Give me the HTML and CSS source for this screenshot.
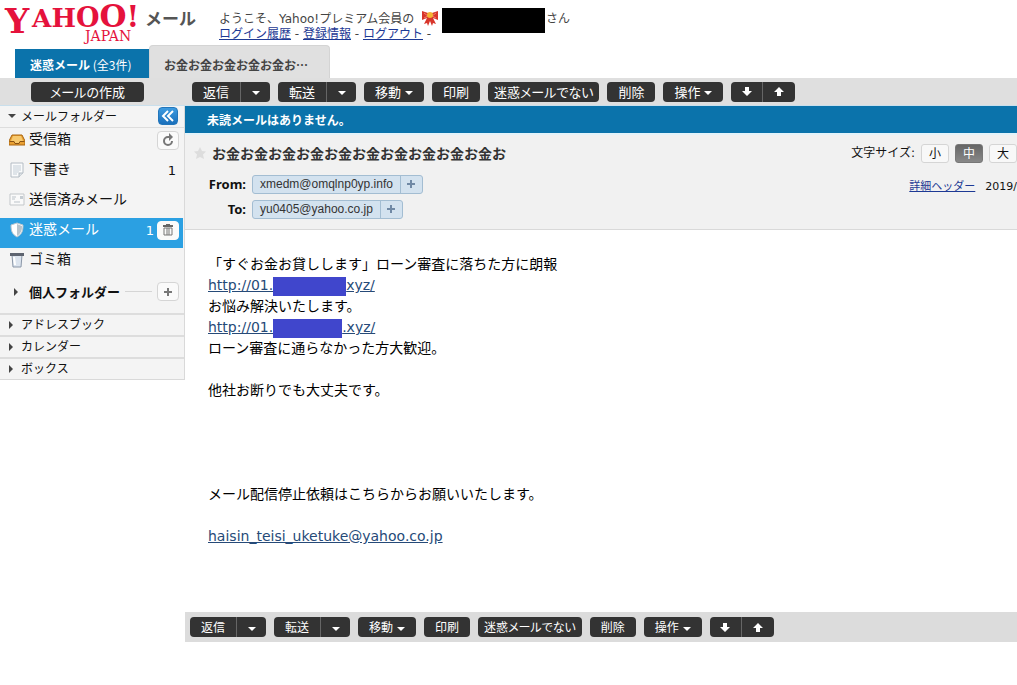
FILE: index.html
```html
<!DOCTYPE html>
<html lang="ja">
<head>
  <meta charset="UTF-8">
  <meta name="viewport" content="width=device-width, initial-scale=1.0">
  <title>Yahoo!メール</title>
  <link rel="stylesheet" href="styles.css">
</head>
<body>
  <header class="header">
    <a class="logo" href="#" aria-label="Yahoo! JAPAN メール">
      <svg viewBox="0 0 143 45" width="143" height="45">
        <g class="logo-red">
          <text x="5" y="33" font-size="34">Y</text>
          <text x="32" y="27"><tspan font-size="25">A</tspan><tspan font-size="26">H</tspan><tspan font-size="27">O</tspan><tspan font-size="31">O</tspan><tspan font-size="29">!</tspan></text>
          <text class="logo-japan" x="85" y="41" font-size="14">JAPAN</text>
        </g>
      </svg>
      <span class="logo-mail">メール</span>
    </a>
    <div class="welcome">
      <div>
        <p>ようこそ、Yahoo!プレミアム会員の
          <svg class="ribbon" viewBox="0 0 16 16" width="16" height="16">
            <path d="M0 1l6 2h4l6-2v9l-5-2 3 6-3-1-1 3-2-5-2 5-1-3-3 1 3-6-5 2z" fill="#d8352a"/>
            <path d="M2 3l4 3-4 2M14 3l-4 3 4 2" stroke="#f0806a" fill="none"/>
            <circle cx="8" cy="5" r="3" fill="#f5b432"/>
          </svg>
        </p>
        <p><a href="#">ログイン履歴</a> - <a href="#">登録情報</a> - <a href="#">ログアウト</a> -</p>
      </div>
      <span class="user-mask"></span>
      <p>さん</p>
    </div>
  </header>

  <nav class="tabs">
    <a class="tab tab-folder" href="#"><b>迷惑メール</b> (全3件)</a>
    <a class="tab tab-mail" href="#">お金お金お金お金お金お…</a>
  </nav>

  <div class="toolbar">
    <div class="compose"><button class="btn btn-compose" type="button">メールの作成</button></div>
    <div class="actions">
      <div class="group"><button class="btn" type="button">返信</button><button class="btn btn-drop" type="button" aria-label="返信メニュー"><i class="arrow"></i></button></div>
      <div class="group"><button class="btn" type="button">転送</button><button class="btn btn-drop" type="button" aria-label="転送メニュー"><i class="arrow"></i></button></div>
      <button class="btn" type="button">移動<i class="arrow"></i></button>
      <button class="btn" type="button">印刷</button>
      <button class="btn btn-long" type="button">迷惑メールでない</button>
      <button class="btn" type="button">削除</button>
      <button class="btn" type="button">操作<i class="arrow"></i></button>
      <div class="group">
        <button class="btn btn-nav" type="button" aria-label="次へ"><svg viewBox="0 0 10 9" width="10" height="9"><path d="M3 0h4v4h3L5 9 0 4h3z"/></svg></button><button class="btn btn-nav" type="button" aria-label="前へ"><svg viewBox="0 0 10 9" width="10" height="9"><path d="M3 9h4V5h3L5 0 0 5h3z"/></svg></button>
      </div>
    </div>
  </div>

  <div class="content">
    <aside class="sidebar">
      <div class="side-head">
        <i class="tri tri-down"></i>メールフォルダー
        <button class="side-btn btn-hide" type="button" aria-label="閉じる"><svg viewBox="0 0 14 12" width="14" height="12"><path d="M7 1L2 6l5 5M12 1L7 6l5 5"/></svg></button>
      </div>
      <ul class="folders">
        <li class="folder">
          <svg viewBox="0 0 16 16" width="16" height="16"><path d="M3 3h10l3 6v4H0V9z" fill="#e9a033" stroke="#a9640f"/><path d="M4 4h8l2 5h-3l-1 2H6L5 9H2z" fill="#f7c96e"/><path d="M0.500 9.500H5l1 2h4l1-2h4.500" fill="none" stroke="#8a5212"/></svg>
          <a href="#">受信箱</a>
          <button class="side-btn" type="button" aria-label="更新"><svg viewBox="0 0 14 14" width="14" height="14"><path d="M11 8a4 4 0 1 1-4-4h2" fill="none" stroke="#777" stroke-width="2"/><path d="M8 0l4 4-4 4z" fill="#777"/></svg></button>
        </li>
        <li class="folder">
          <svg viewBox="0 0 16 16" width="16" height="16"><path d="M2 1h12v10l-4 4H2z" fill="#fafbfc" stroke="#b4bcc4"/><path d="M4 4h8M4 6h8M4 8h8M4 10h6M4 12h4" stroke="#c3cdd6"/><path d="M14 11h-4v4" fill="#dde2e6" stroke="#b4bcc4"/></svg>
          <a href="#">下書き</a>
          <span class="count">1</span>
        </li>
        <li class="folder">
          <svg viewBox="0 0 16 16" width="16" height="16"><path d="M1 2h14v11H1z" fill="#fafafa" stroke="#c3c7ca"/><path d="M11 4h3v3h-3z" fill="#c5ccd2"/><path d="M3 5h4M3 7h3M5 10h6" fill="none" stroke="#bcc3c9"/></svg>
          <a href="#">送信済みメール</a>
        </li>
        <li class="folder folder-on">
          <svg viewBox="0 0 16 16" width="16" height="16"><path d="M8 1l6 2c0 6-1 9-6 12C3 12 2 9 2 3z" fill="#fff" stroke="#b9c6cf"/><path d="M8 2l5 2c0 5-1 7-5 10z" fill="#b7c3cb"/></svg>
          <a href="#">迷惑メール</a>
          <span class="count">1</span>
          <button class="side-btn" type="button" aria-label="空にする"><svg viewBox="0 0 12 12" width="12" height="12"><path d="M1 2h10M4 1h4" stroke="#666" stroke-width="2"/><path d="M2 4h8v7H2zM5 4v7M7 4v7" fill="none" stroke="#777"/></svg></button>
        </li>
        <li class="folder">
          <svg viewBox="0 0 16 16" width="16" height="16"><path d="M3 3h10l-1 12H4z" fill="#dce4ee" stroke="#8b97a8"/><path d="M1 1h14v3H1z" fill="#5e6470"/><path d="M5 5l1 8" stroke="#fff" stroke-width="2"/></svg>
          <a href="#">ゴミ箱</a>
        </li>
      </ul>
      <div class="personal">
        <i class="tri tri-right"></i><b>個人フォルダー</b><span class="rule"></span>
        <button class="side-btn" type="button" aria-label="フォルダーを追加"><svg viewBox="0 0 10 10" width="10" height="10"><path d="M5 1v8M1 5h8" stroke="#777" stroke-width="2"/></svg></button>
      </div>
      <a class="side-link" href="#"><i class="tri tri-right"></i>アドレスブック</a>
      <a class="side-link" href="#"><i class="tri tri-right"></i>カレンダー</a>
      <a class="side-link" href="#"><i class="tri tri-right"></i>ボックス</a>
    </aside>

    <main class="main">
      <p class="notice">未読メールはありません。</p>
      <section class="mail-head">
        <div class="mail-info">
          <h1 class="subject"><svg viewBox="0 0 12 12" width="12" height="12"><path d="M6 0l2 4 4 .5-3 3 1 4.500-4-2-4 2 1-4.500-3-3L4 4z"/></svg>お金お金お金お金お金お金お金お金お金お金お</h1>
          <dl class="address">
            <dt>From:</dt>
            <dd><span class="chip"><span>xmedm@omqlnp0yp.info</span><button type="button" aria-label="追加"><svg viewBox="0 0 8 8" width="8" height="8"><path d="M4 0v8M0 4h8"/></svg></button></span></dd>
            <dt>To:</dt>
            <dd><span class="chip"><span>yu0405@yahoo.co.jp</span><button type="button" aria-label="追加"><svg viewBox="0 0 8 8" width="8" height="8"><path d="M4 0v8M0 4h8"/></svg></button></span></dd>
          </dl>
        </div>
        <div class="mail-tools">
          <div class="size">文字サイズ:
            <button type="button">小</button>
            <button class="size-on" type="button">中</button>
            <button type="button">大</button>
          </div>
          <div class="detail"><a href="#">詳細ヘッダー</a> <span>2019/</span></div>
        </div>
      </section>

      <article class="mail-body">
        <p>「すぐお金お貸しします」ローン審査に落ちた方に朗報<br>
          <a href="#">http://01.<span class="mask"></span>xyz/</a><br>
          お悩み解決いたします。<br>
          <a href="#">http://01.<span class="mask mask-short"></span>.xyz/</a><br>
          ローン審査に通らなかった方大歓迎。</p>
        <p>他社お断りでも大丈夫です。</p>
        <p class="optout">メール配信停止依頼はこちらからお願いいたします。</p>
        <p><a href="#">haisin_teisi_uketuke@yahoo.co.jp</a></p>
      </article>

      <div class="toolbar toolbar-bottom">
        <div class="actions">
          <div class="group"><button class="btn" type="button">返信</button><button class="btn btn-drop" type="button" aria-label="返信メニュー"><i class="arrow"></i></button></div>
          <div class="group"><button class="btn" type="button">転送</button><button class="btn btn-drop" type="button" aria-label="転送メニュー"><i class="arrow"></i></button></div>
          <button class="btn" type="button">移動<i class="arrow"></i></button>
          <button class="btn" type="button">印刷</button>
          <button class="btn btn-long" type="button">迷惑メールでない</button>
          <button class="btn" type="button">削除</button>
          <button class="btn" type="button">操作<i class="arrow"></i></button>
          <div class="group">
            <button class="btn btn-nav" type="button" aria-label="次へ"><svg viewBox="0 0 10 9" width="10" height="9"><path d="M3 0h4v4h3L5 9 0 4h3z"/></svg></button><button class="btn btn-nav" type="button" aria-label="前へ"><svg viewBox="0 0 10 9" width="10" height="9"><path d="M3 9h4V5h3L5 0 0 5h3z"/></svg></button>
          </div>
        </div>
      </div>
    </main>
  </div>
</body>
</html>
```

FILE: styles.css
```css
* {
  margin: 0;
  padding: 0;
  box-sizing: border-box;
}

body {
  background-color: #fff;
  color: #111;
  font-family: "DejaVu Sans", "Noto Sans CJK JP", sans-serif;
  font-size: 12px;
  line-height: 15px;
}

button {
  font: inherit;
  color: inherit;
  border: none;
  background: none;
  cursor: pointer;
}

a {
  color: #1d3994;
}

ul {
  list-style: none;
}

svg {
  flex: none;
}

/* ヘッダー */
.header {
  display: flex;
  align-items: flex-start;
  height: 45px;
}

.logo {
  display: flex;
  width: 219px;
  text-decoration: none;
  flex: none;
}

.logo-red {
  fill: #e5123c;
  font-family: "DejaVu Serif", serif;
  font-weight: bold;
}

.logo-japan {
  font-weight: normal;
}

.logo-mail {
  margin: 9px 0 0 2px;
  color: #555;
  font-size: 17px;
  font-weight: bold;
  line-height: 20px;
}

.welcome {
  display: flex;
  padding-top: 12px;
  color: #444;
  white-space: nowrap;
}

.ribbon {
  margin: -4px 0 0 4px;
  vertical-align: middle;
}

.user-mask {
  width: 103px;
  height: 25px;
  margin: -4px 1px 0 4px;
  background-color: #000;
}

/* タブ */
.tabs {
  display: flex;
  align-items: flex-end;
  height: 33px;
  padding-left: 15px;
}

.tab {
  font-family: "Noto Sans CJK JP", sans-serif;
  text-decoration: none;
  white-space: nowrap;
}

.tab-folder {
  width: 134px;
  height: 29px;
  padding: 1px 15px 0;
  background-color: #0b73ab;
  color: #fff;
  line-height: 29px;
}

.tab-mail {
  width: 181px;
  height: 33px;
  padding: 5px 14px 0;
  background-color: #e0e0e0;
  border: 1px solid #d4d4d4;
  border-bottom: none;
  border-radius: 4px 4px 0 0;
  color: #444;
  font-weight: bold;
  line-height: 28px;
}

/* ツールバー */
.toolbar {
  display: flex;
  align-items: center;
  height: 28px;
  background-color: #dfdfdf;
  border-bottom: 1px solid #c9dfec;
  font-size: 13px;
}

.compose {
  width: 185px;
  padding-left: 31px;
  flex: none;
}

.actions {
  display: flex;
  gap: 8px;
  padding-left: 7px;
}

.group {
  display: flex;
}

.btn {
  display: flex;
  align-items: center;
  justify-content: center;
  height: 20px;
  padding: 0 11px;
  background-color: #333;
  border-radius: 4px;
  color: #fff;
  font-family: "Noto Sans CJK JP", sans-serif;
  font-feature-settings: "palt";
  line-height: 20px;
  white-space: nowrap;
}

.btn svg {
  fill: #fff;
}

.btn-compose {
  width: 113px;
}

.btn-long {
  padding: 0 6px;
}

.group .btn:first-child {
  border-right: 1px solid #666;
  border-radius: 4px 0 0 4px;
}

.group .btn:last-child {
  border-radius: 0 4px 4px 0;
}

.btn-drop {
  width: 29px;
}

.btn-nav {
  width: 32px;
}

.arrow {
  border: 4px solid transparent;
  border-top-color: #fff;
  border-bottom: none;
}

.btn .arrow {
  margin: 3px 0 0 4px;
}

.btn-drop .arrow {
  margin-left: 0;
}

/* サイドバー */
.content {
  display: flex;
  align-items: flex-start;
}

.sidebar {
  width: 185px;
  background-color: #f4f4f4;
  border: 1px solid #d9d9d9;
  border-width: 0 1px 1px 0;
  font-family: "Noto Sans CJK JP", sans-serif;
  flex: none;
}

.side-head {
  display: flex;
  align-items: center;
  height: 22px;
  padding: 0 6px 2px 8px;
  border-bottom: 1px solid #ddd;
}

.tri {
  flex: none;
  border: 4px solid transparent;
}

.tri-down {
  margin-right: 5px;
  border-top-color: #444;
  border-bottom: none;
}

.tri-right {
  border-left-color: #444;
  border-right: none;
}

.side-btn {
  display: flex;
  align-items: center;
  justify-content: center;
  width: 22px;
  height: 19px;
  margin-left: auto;
  background-color: #fafafa;
  border: 1px solid #d5d5d5;
  border-radius: 4px;
}

.btn-hide {
  width: 20px;
  height: 18px;
  background: linear-gradient(#3d9be0, #1b70bb);
  border-color: #2376bb;
}

.btn-hide path {
  fill: none;
  stroke: #fff;
  stroke-width: 2;
}

.folder {
  display: flex;
  align-items: center;
  height: 30px;
  padding: 0 5px 6px 9px;
  font-size: 14px;
}

.folder a {
  margin-left: 4px;
  padding-bottom: 3px;
  color: #111;
  text-decoration: none;
}

.count {
  margin: 0 3px 0 auto;
  font-family: "DejaVu Sans", sans-serif;
  font-size: 13px;
}

.count + .side-btn {
  margin-left: 0;
}

.folder-on {
  margin-right: 1px;
  padding-right: 4px;
  background-color: #2ba0e2;
  color: #fff;
}

.folder-on a {
  color: #fff;
}

.folder-on .side-btn {
  border-color: #fafafa;
}

.personal {
  display: flex;
  align-items: center;
  height: 35px;
  padding: 0 5px 8px 14px;
  font-size: 13px;
}

.personal b {
  margin-left: 11px;
}

.rule {
  width: 27px;
  margin-left: 5px;
  border-top: 1px solid #d5d5d5;
}

.side-link {
  display: flex;
  align-items: center;
  height: 22px;
  padding: 0 0 4px 9px;
  border-top: 2px solid #ddd;
  color: #111;
  text-decoration: none;
}

.side-link .tri {
  margin: 4px 8px 0 0;
}

/* メール本文 */
.main {
  flex: 1;
  min-width: 0;
}

.notice {
  padding: 0 22px;
  background-color: #0b73ab;
  color: #fff;
  font-family: "Noto Sans CJK JP", sans-serif;
  font-weight: bold;
  line-height: 27px;
}

.mail-head {
  display: flex;
  justify-content: space-between;
  height: 97px;
  background-color: #f1f1f1;
  border-top: 2px solid #e3f3fa;
  border-bottom: 1px solid #d9d9d9;
  white-space: nowrap;
}

.mail-info {
  padding: 8px 0 0 9px;
}

.subject {
  display: flex;
  align-items: center;
  gap: 6px;
  color: #333;
  font-family: "Noto Sans CJK JP", sans-serif;
  font-size: 14px;
  line-height: 20px;
}

.subject svg {
  fill: #ddd;
}

.address {
  display: grid;
  grid-template-columns: 52px auto;
  gap: 6px;
  margin-top: 12px;
}

.address dt {
  font-family: "Noto Sans", sans-serif;
  font-size: 13px;
  font-weight: bold;
  line-height: 18px;
  text-align: right;
}

.chip {
  display: inline-flex;
  height: 19px;
  background-color: #d3e2ef;
  border: 1px solid #a3bdd2;
  border-radius: 3px;
  color: #333;
  font-family: "Liberation Sans", sans-serif;
  line-height: 17px;
  vertical-align: top;
}

.chip span {
  padding: 0 7px;
}

.chip button {
  width: 22px;
  border-left: 1px solid #a3bdd2;
}

.chip path {
  stroke: #7089a5;
  stroke-width: 2;
}

.mail-tools {
  padding-top: 9px;
}

.size {
  display: flex;
  align-items: center;
  justify-content: flex-end;
  gap: 6px;
}

.size button {
  width: 28px;
  height: 19px;
  background-color: #f8f8f8;
  border: 1px solid #d5d5d5;
  border-radius: 3px;
  line-height: 16px;
}

.size .size-on {
  background: linear-gradient(#666, #888);
  border-color: #777;
  color: #fff;
}

.detail {
  display: flex;
  justify-content: flex-end;
  gap: 10px;
  margin-top: 16px;
  font-size: 11px;
}

.mail-body {
  padding: 24px 23px 65px;
  color: #000;
  font-size: 14px;
  line-height: 21px;
}

.mail-body p {
  margin-bottom: 21px;
}

.mail-body p:last-child {
  margin-bottom: 0;
}

.mail-body .optout {
  margin-top: 83px;
}

.mail-body a {
  color: #264a78;
}

.mask {
  display: inline-block;
  width: 73px;
  height: 19px;
  background-color: #4046cc;
  vertical-align: middle;
}

.mask-short {
  width: 69px;
}

.toolbar-bottom {
  height: 30px;
  background-color: #dcdcdc;
  border-bottom: none;
  font-size: 12px;
}

.toolbar-bottom .actions {
  padding-left: 5px;
}
```
